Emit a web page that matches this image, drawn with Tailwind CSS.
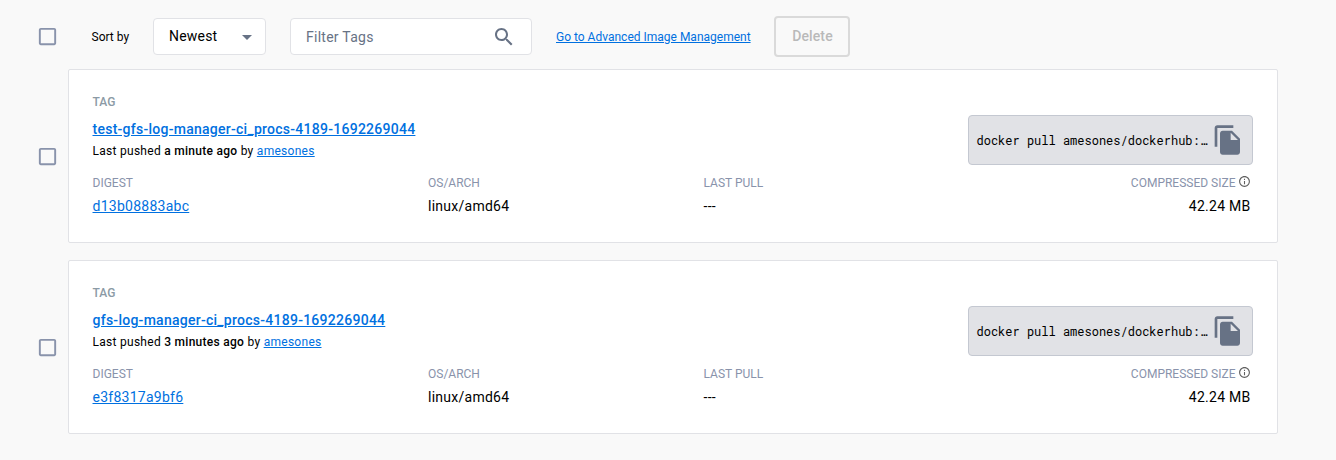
<!DOCTYPE html>
<html lang="en">
<head>
<meta charset="utf-8">
<title>Tags</title>
<script src="https://cdn.jsdelivr.net/npm/@tailwindcss/browser@4"></script>
</head>
<body class="h-[460px] w-[1336px] overflow-hidden bg-[#f9f9f9] font-['Roboto',sans-serif] text-black">
<svg class="hidden">
  <symbol id="box" viewBox="0 0 24 24"><path fill="#8993ab" d="M19 5v14H5V5h14m0-2H5c-1.1 0-2 .9-2 2v14c0 1.1.9 2 2 2h14c1.1 0 2-.9 2-2V5c0-1.1-.9-2-2-2z"/></symbol>
  <symbol id="copy" viewBox="0 0 24 24"><path fill="#677285" d="M16 1H4c-1.100 0-2 .9-2 2v14h2V3h12V1zm-1 4l6 6v10c0 1.100-.9 2-2 2H7.990C6.890 23 6 22.100 6 21l.010-14c0-1.100.890-2 1.990-2h7zm-1 7h5.500L14 6.500V12z"/></symbol>
  <symbol id="info" viewBox="0 0 24 24"><path fill="#606060" d="M11 7h2v2h-2zm0 4h2v6h-2zm1-9C6.480 2 2 6.480 2 12s4.480 10 10 10 10-4.480 10-10S17.520 2 12 2zm0 18c-4.410 0-8-3.590-8-8s3.590-8 8-8 8 3.590 8 8-3.590 8-8 8z"/></symbol>
</svg>

<header class="flex h-[69px] items-center pt-1 pl-9">
  <svg class="size-[23px]"><use href="#box"/></svg>
  <span class="ml-[32.500px] w-[61.500px] text-xs">Sort by</span>
  <button class="flex h-[37px] w-[113px] items-center justify-between rounded border border-[#e1e2e6] bg-white pr-[13px] pl-[15px] text-sm tracking-[0.2px]">
    <span class="-mt-px font-[450]">Newest</span>
    <svg class="mt-0.5 h-[5px] w-[10px]" viewBox="0 0 10 5"><path fill="#677285" d="M0 0h10L5 5z"/></svg>
  </button>
  <div class="ml-6 flex h-[37px] w-[242px] items-center justify-between rounded border border-[#e1e2e6] bg-white pr-[15px] pl-[15px] text-sm tracking-[0.26px] text-[#677285]">
    <span>Filter Tags</span>
    <svg class="size-6" viewBox="0 0 24 24"><path fill="#677285" d="M15.500 14h-.790l-.280-.270C15.410 12.590 16 11.110 16 9.500 16 5.910 13.090 3 9.500 3S3 5.910 3 9.500 5.910 16 9.500 16c1.610 0 3.090-.590 4.230-1.570l.270.280v.790l5 4.990L20.490 19l-4.990-5zm-6 0C7.010 14 5 11.990 5 9.500S7.010 5 9.500 5 14 7.010 14 9.500 11.990 14 9.500 14z"/></svg>
  </div>
  <a class="ml-6 w-[218px] text-xs text-[#0070e0] underline">Go to Advanced Image Management</a>
  <button class="h-[41px] w-[76px] rounded border-2 border-[#dadada] pb-px pl-px text-sm font-medium tracking-[0.1px] text-[#b9b9b9]">Delete</button>
</header>

<main class="flex flex-col gap-[17px] pl-9">
  <section class="flex items-center">
    <svg class="mr-[9px] size-[23px]"><use href="#box"/></svg>
    <article class="h-[174px] w-[1210px] rounded-xs border border-[#e1e2e6] bg-white pt-6 pr-6 pl-[23.500px]">
      <div class="flex justify-between">
        <div>
          <p class="text-xs leading-4 font-medium text-[#8b9aa5]">TAG</p>
          <h2 class="mt-[7px] text-sm leading-6 font-medium tracking-[0.26px] text-[#0070e0] underline">test-gfs-log-manager-ci_procs-4189-1692269044</h2>
          <p class="mt-px text-xs leading-[18px] tracking-[0.28px]">Last pushed <b class="font-medium">a minute ago</b> by <a class="text-[#0070e0] underline">amesones</a></p>
        </div>
        <div class="mt-[21px] flex h-[50px] w-[285px] items-center justify-between rounded border border-[#c4c8d1] bg-[#e1e2e6] pr-2 pl-[7.500px]">
          <code class="font-['Roboto_Mono','Liberation_Mono',monospace] text-xs">docker pull amesones/dockerhub:…</code>
          <svg class="size-8"><use href="#copy"/></svg>
        </div>
      </div>
      <dl class="mt-[8px] grid grid-cols-[335.500px_275.500px_1fr_auto] pr-[2px] text-sm tracking-[0.26px]">
        <div><dt class="text-xs leading-5 tracking-normal text-[#8993ab]">DIGEST</dt><dd class="mt-px leading-6 text-[#0070e0] underline">d13b08883abc</dd></div>
        <div><dt class="text-xs leading-5 tracking-normal text-[#8993ab]">OS/ARCH</dt><dd class="mt-px leading-6">linux/amd64</dd></div>
        <div><dt class="text-xs leading-5 tracking-normal text-[#8993ab]">LAST PULL</dt><dd class="mt-px leading-6">---</dd></div>
        <div class="text-right"><dt class="flex text-xs leading-5 tracking-normal text-[#8993ab]">COMPRESSED SIZE<svg class="mt-[1.500px] ml-[2.500px] size-[13px]"><use href="#info"/></svg></dt><dd class="mt-px pr-[0.500px] leading-6">42.24 MB</dd></div>
      </dl>
    </article>
  </section>

  <section class="flex items-center">
    <svg class="mr-[9px] size-[23px]"><use href="#box"/></svg>
    <article class="h-[174px] w-[1210px] rounded-xs border border-[#e1e2e6] bg-white pt-6 pr-6 pl-[23.500px]">
      <div class="flex justify-between">
        <div>
          <p class="text-xs leading-4 font-medium text-[#8b9aa5]">TAG</p>
          <h2 class="mt-[7px] text-sm leading-6 font-medium tracking-[0.26px] text-[#0070e0] underline">gfs-log-manager-ci_procs-4189-1692269044</h2>
          <p class="mt-px text-xs leading-[18px] tracking-[0.28px]">Last pushed <b class="font-medium">3 minutes ago</b> by <a class="text-[#0070e0] underline">amesones</a></p>
        </div>
        <div class="mt-[21px] flex h-[50px] w-[285px] items-center justify-between rounded border border-[#c4c8d1] bg-[#e1e2e6] pr-2 pl-[7.500px]">
          <code class="font-['Roboto_Mono','Liberation_Mono',monospace] text-xs">docker pull amesones/dockerhub:…</code>
          <svg class="size-8"><use href="#copy"/></svg>
        </div>
      </div>
      <dl class="mt-[8px] grid grid-cols-[335.500px_275.500px_1fr_auto] pr-[2px] text-sm tracking-[0.26px]">
        <div><dt class="text-xs leading-5 tracking-normal text-[#8993ab]">DIGEST</dt><dd class="mt-px leading-6 text-[#0070e0] underline">e3f8317a9bf6</dd></div>
        <div><dt class="text-xs leading-5 tracking-normal text-[#8993ab]">OS/ARCH</dt><dd class="mt-px leading-6">linux/amd64</dd></div>
        <div><dt class="text-xs leading-5 tracking-normal text-[#8993ab]">LAST PULL</dt><dd class="mt-px leading-6">---</dd></div>
        <div class="text-right"><dt class="flex text-xs leading-5 tracking-normal text-[#8993ab]">COMPRESSED SIZE<svg class="mt-[1.500px] ml-[2.500px] size-[13px]"><use href="#info"/></svg></dt><dd class="mt-px pr-[0.500px] leading-6">42.24 MB</dd></div>
      </dl>
    </article>
  </section>
</main>
</body>
</html>
